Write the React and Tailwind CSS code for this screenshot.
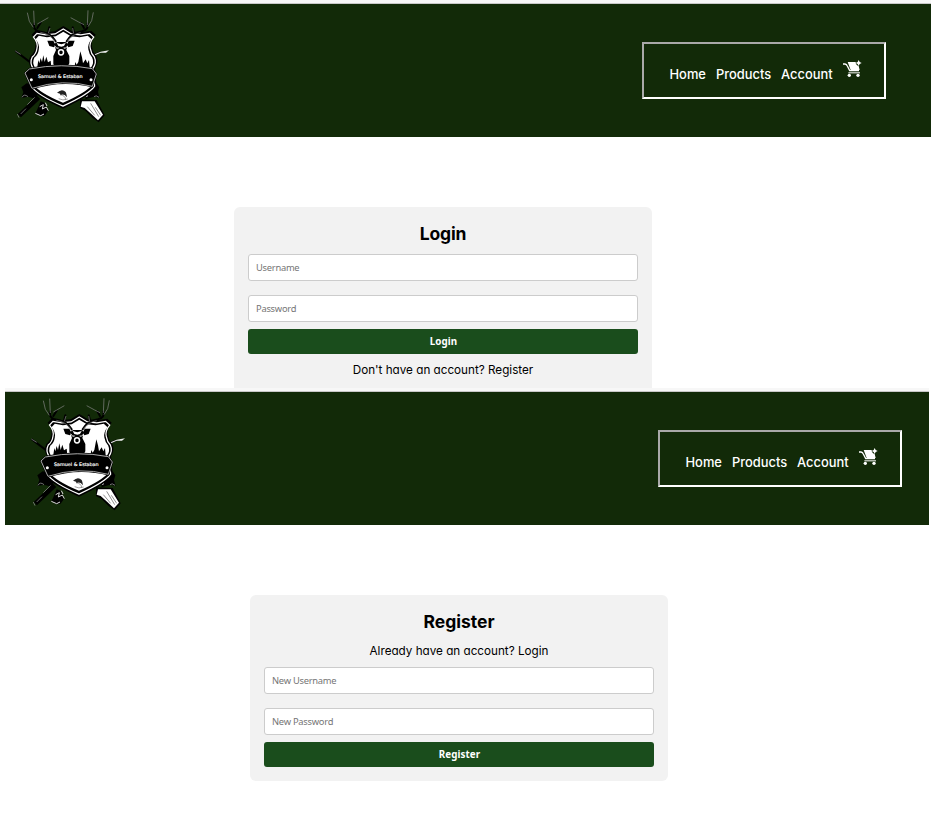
import React from "react";

const SHIELD =
  "M190 78 L216 94 L246 97 L274 92 L287 104 Q272 122 276 140 Q279 158 289 168 Q297 186 285 204 L290 262 Q272 288 189 326 Q106 290 88 262 L93 204 Q82 186 91 168 Q104 158 106 140 Q110 122 95 104 L106 92 L134 97 L164 94 Z";

function Crest() {
  return (
    <svg className="h-[133px] w-[125px] shrink-0" viewBox="0 12 375 399">
      {/* rod and rifle tips behind the shield */}
      <path d="M46 153 L92 188" stroke="#000" strokeWidth="6" />
      <path d="M46 153 L62 163" stroke="#999" strokeWidth="2" />
      <path d="M274 168 L300 157" stroke="#000" strokeWidth="5" />
      <path d="M280 164 L302 155 L327 151 L318 158 L302 158 L282 167 Z" fill="#eee" />
      {/* ribbon tails */}
      <path d="M80 250 L64 262 L70 276 L64 294 L84 290 L112 298 L110 256 Z" fill="#000" />
      <path d="M290 250 L298 262 L294 276 L299 294 L282 290 L256 298 L262 256 Z" fill="#000" />
      <path d="M66 292 Q72 280 84 290 M282 290 Q288 284 297 292" stroke="#aaa" strokeWidth="2" fill="none" />
      {/* fishing rod */}
      <path d="M116 292 L58 347" stroke="#000" strokeWidth="14" />
      <path d="M104 292 L82 314 M78 326 L62 342 M52 342 L57 353" stroke="#999" strokeWidth="2" />
      <path d="M122 304 L112 328 L106 340 L122 349 L134 347 L144 332 L134 308 Z" fill="#000" />
      <path d="M119 320 L130 314 L127 327 L139 321 L145 332 M106 340 L122 347 L132 342 M136 308 L141 318" stroke="#ddd" strokeWidth="3" fill="none" />
      {/* rifle stock */}
      <path d="M240 298 L290 300 L314 346 L296 367 L278 354 L256 332 L240 324 Z" fill="#000" />
      <path d="M246 304 L284 304 L309 344 L294 361 L274 342 L254 324 L242 320 Z" fill="#fff" />
      <path d="M262 320 L284 346 M272 310 L296 350 M286 322 L302 346" stroke="#555" strokeWidth="2" />
      <path d="M246 282 L265 276 L260 291" stroke="#fff" strokeWidth="3" fill="none" />
      {/* shield */}
      <path d={SHIELD} fill="#000" />
      <g transform="translate(11.3 14.2) scale(.94 .933)">
        <path d={SHIELD} fill="none" stroke="#fff" strokeWidth="4" />
      </g>
      <g transform="translate(23.6 28) scale(.875 .86)">
        <path d={SHIELD} fill="#fff" />
      </g>
      {/* pines */}
      <path d="M112 200 L115 180 L118 190 L122 174 L126 186 L130 166 L134 186 L139 170 L144 187 L152 182 L155 210 L112 212 Z" fill="#000" />
      <path d="M222 210 L226 186 L230 194 L235 186 L241 154 L246 172 L249 190 L257 178 L262 190 L267 180 L270 212 Z" fill="#000" />
      {/* stag */}
      <path d="M142 122 L160 122 L166 134 L162 142 L148 138 Z M224 122 L206 122 L201 134 L205 142 L218 138 Z" fill="#000" />
      <path d="M162 132 L172 126 L196 126 L204 132 L199 150 L208 168 L208 190 L196 212 L172 212 L160 192 L160 168 L168 150 Z" fill="#000" />
      <path d="M170 129 L184 133 L197 129 L192 138 L184 140 L175 138 Z" fill="#fff" />
      <path d="M164 138 Q171 148 176 144 M203 138 Q196 148 191 144" stroke="#fff" strokeWidth="3" fill="none" />
      <ellipse cx="183" cy="157" rx="7.5" ry="8" fill="#000" stroke="#fff" strokeWidth="4.5" />
      {/* antlers */}
      <g fill="none" stroke="#000" strokeLinecap="round">
        <path d="M167 124 Q151 98 116 94 Q97 88 103 70 M112 84 L122 68 M143 102 L148 82" strokeWidth="6" />
        <path d="M200 124 Q216 98 246 94 Q268 88 262 70 M252 84 L244 70 M224 102 L218 82" strokeWidth="6" />
      </g>
      <g fill="none" stroke="#8a8a8a" strokeWidth="2">
        <path d="M101 32 L103 75 M82 38 L88 64 L100 82 M145 53 L112 72 M164 122 Q150 102 121 97 M145 100 L150 84" />
        <path d="M264 31 L262 75 M280 37 L275 62 L264 80 M212 53 L236 66 L252 74 M203 122 Q216 103 242 98 M221 101 L218 84" />
      </g>
      {/* banner */}
      <path d="M72 219 L87 204 Q185 183 278 203 L292 222 L279 263 Q188 238 94 269 Z" fill="#000" />
      <path d="M75 219 L88 207 Q185 188 277 206 L289 222 L277 259 Q188 235 96 265 Z" fill="none" stroke="#ccc" strokeWidth="2.5" />
      <circle cx="94" cy="239" r="4.5" fill="#fff" />
      <circle cx="273" cy="239" r="4.5" fill="#fff" />
      <text x="114" y="234" fill="#fff" fontFamily="'DejaVu Sans', sans-serif" fontSize="14" fontWeight="400" stroke="#fff" strokeWidth=".5" textLength="134" lengthAdjust="spacingAndGlyphs">
        Samuel &amp; Estaban
      </text>
      {/* leaping fish */}
      <path d="M171 278 Q186 264 197 276 Q200 282 201 292 L194 285 Q186 281 182 286 L180 281 Z" fill="#222" />
      <path d="M180 284 Q196 286 197 299 M176 296 Q188 303 203 297" fill="none" stroke="#444" strokeWidth="1.5" />
    </svg>
  );
}

function CartIcon() {
  return (
    <svg className="ml-[9px] mt-[16px] h-[18px] w-[20px]" viewBox="0 0 60 54" fill="#fff">
      <path d="M3 12 H9 Q14 13 16 18 L23 32 H51" fill="none" stroke="#fff" strokeWidth="4" />
      <path d="M17 6 H41 Q41 15 50 18 L53 30 H26 Z" />
      <path d="M50 0 L53 6 L59 9 L53 12 L50 18 L47 12 L41 9 L47 6 Z" />
      <path d="M19 37 H54 V40 H19 Z" />
      <circle cx="22" cy="46" r="5" />
      <circle cx="48" cy="46" r="5" />
    </svg>
  );
}

function NavLink({ children, className }) {
  return (
    <a className={"mt-[21px] whitespace-nowrap text-[12.9px] font-medium leading-[20px] text-white " + className}>
      {children}
    </a>
  );
}

function Header({ className }) {
  return (
    <div>
      <div className="h-1 border-b border-[#c8c8c8] bg-[#f7f7f7]" />
      <header className={"flex h-[133px] items-start justify-between bg-[#122a08] " + className}>
        <Crest />
        <nav className="mt-[38px] flex h-[57px] w-[244px] items-start border-2 border-b-white border-l-[#a9a9a9] border-r-white border-t-[#a9a9a9] pl-[25.5px]">
          <NavLink className="w-[46.5px]">Home</NavLink>
          <NavLink className="w-[65px]">Products</NavLink>
          <NavLink className="w-[52px]">Account</NavLink>
          <CartIcon />
        </nav>
      </header>
    </div>
  );
}

function Field({ placeholder, type = "text", className = "" }) {
  return (
    <input
      type={type}
      placeholder={placeholder}
      className={
        "block h-[27px] w-full rounded-[3px] border border-[#ccc] bg-white px-[7px] font-['Noto_Sans',sans-serif] text-[9.33px] tracking-[-0.25px] placeholder:text-[#757575] " +
        className
      }
    />
  );
}

function Submit({ children }) {
  return (
    <button className="mt-[7px] block h-[25px] w-full rounded-[3px] bg-[#1a4d1c] pl-px pt-[2px] font-['Noto_Sans',sans-serif] text-[9.8px] font-bold tracking-[0.1px] text-white">
      {children}
    </button>
  );
}

export default function App() {
  return (
    <div className="h-[818px] w-[931px] overflow-hidden bg-white font-['Inter',sans-serif] text-black [font-feature-settings:'cv11']">
      <section className="h-[388px] overflow-hidden">
        <Header className="pr-[45px]" />
        <div className="ml-[234px] mt-[70px] h-[186px] w-[418px] rounded-[6px] bg-[#f2f2f2] px-[14px] pt-[14px]">
          <h2 className="h-[33px] text-center text-[17.5px] font-bold leading-[26px] tracking-[-0.15px]">Login</h2>
          <Field placeholder="Username" />
          <Field placeholder="Password" type="password" className="mt-[14px]" />
          <Submit>Login</Submit>
          <p className="mt-[7px] text-center text-[11.7px] leading-[18px]">Don't have an account? Register</p>
        </div>
      </section>
      <section className="ml-[5px] mr-[2px] h-[430px]">
        <Header className="pl-[11px] pr-[27px]" />
        <div className="ml-[245px] mt-[70px] h-[186px] w-[418px] rounded-[6px] bg-[#f2f2f2] px-[14px] pt-[14px]">
          <h2 className="h-[33px] text-center text-[17.5px] font-bold leading-[26px] tracking-[0px]">Register</h2>
          <p className="h-[25px] text-center text-[11.7px] leading-[18px]">Already have an account? Login</p>
          <Field placeholder="New Username" />
          <Field placeholder="New Password" type="password" className="mt-[14px]" />
          <Submit>Register</Submit>
        </div>
      </section>
    </div>
  );
}
